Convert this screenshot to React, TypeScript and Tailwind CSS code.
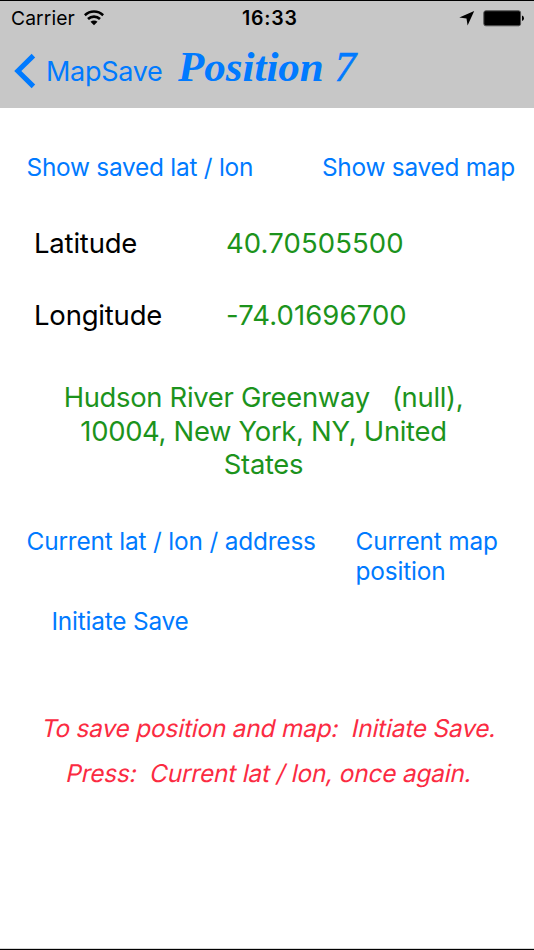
import React from "react";

function StatusBar() {
  return (
    <div className="flex h-[35px] items-center text-[19.3px] leading-[35px] text-black">
      <span className="w-[63px] tracking-[0.1px]">Carrier</span>
      <svg className="ml-[10px] mt-[-2px]" width="20" height="16" viewBox="0 0 20 16" fill="none" stroke="#000" strokeWidth="2.6">
        <path d="M0.8 5.2C6 .2 14 .2 19.2 5.2" />
        <path d="M4 9C7.4 5.8 12.6 5.8 16 9" />
        <path d="M6.5 11.8C8.5 10 11.5 10 13.5 11.8L10 15.2Z" fill="#000" stroke="none" />
      </svg>
      <span className="ml-[138px] w-[58px] text-[19.5px] font-semibold tracking-[0.8px]">16:33</span>
      <svg className="ml-[159px]" width="16" height="15" viewBox="0 0 16 15">
        <path d="M15.2 0L8.6 14.4L7.5 7.6L0.3 6.5Z" />
      </svg>
      <svg className="ml-[8px]" width="42" height="17" viewBox="0 0 42 17">
        <rect x=".8" y=".8" width="36.8" height="15" rx="2" stroke="#555" strokeWidth="1" />
        <path d="M39 5.5Q41 6 41 8.3Q41 10.6 39 11.1Z" />
      </svg>
    </div>
  );
}

function Header() {
  return (
    <header className="h-[108px] border-t border-black bg-[#c7c7c7] pl-[11px]">
      <StatusBar />
      <div className="flex h-[70px] items-center text-[#007aff]">
        <svg className="ml-[3px]" width="22" height="36" viewBox="0 0 22 36" fill="none" stroke="currentColor" strokeWidth="5">
          <path d="M19.4 2.6L3.8 18L19.4 33.4" />
        </svg>
        <button className="mt-[2px] ml-[10px] w-[119px] text-left text-[27px] leading-[70px] tracking-[-0.3px]">MapSave</button>
        <h1 className="mt-[-8px] ml-[13px] whitespace-nowrap font-['Liberation_Serif',serif] text-[43px] leading-[70px] font-bold italic">
          Position <span className="font-normal [-webkit-text-stroke:0.7px_#007aff]">7</span>
        </h1>
      </div>
    </header>
  );
}

function Reading({ label, value }: { label: string; value: string }) {
  return (
    <div className="flex h-[72px] items-center whitespace-nowrap pl-[34px] text-[27.5px] leading-[72px]">
      <dt className="w-[192px] tracking-[-0.2px] text-black">{label}</dt>
      <dd className="tracking-[0.1px] text-[#1c931c]">{value}</dd>
    </div>
  );
}

export default function App() {
  return (
    <main className="flex h-[950px] w-[534px] flex-col overflow-hidden border-b border-black bg-white font-['Inter',sans-serif] font-normal">
      <Header />
      <div className="mt-[39px] flex h-10 justify-between whitespace-nowrap pr-[19px] pl-[26.5px] text-[24.4px] leading-10 tracking-[-0.25px] text-[#007aff]">
        <button>Show saved lat / lon</button>
        <button>Show saved map</button>
      </div>
      <dl className="mt-[20px]">
        <Reading label="Latitude" value="40.70505500" />
        <Reading label="Longitude" value="-74.01696700" />
      </dl>
      <p className="mt-[30px] pr-[7px] text-center text-[27.4px] leading-[33.7px] tracking-[-0.3px] whitespace-pre text-[#1c931c]">
        {"Hudson River Greenway   (null),\n10004, New York, NY, United\nStates"}
      </p>
      <div className="mt-[45px] flex text-[24.4px] leading-[29.5px] tracking-[-0.17px] text-[#007aff]">
        <button className="ml-[26.5px] h-[30px] w-[329px] text-left">Current lat / lon / address</button>
        <button className="w-[160px] text-left">Current map position</button>
      </div>
      <button className="mt-[18px] ml-[51.5px] h-[34px] w-[160px] text-left text-[24.4px] leading-[34px] tracking-[-0.2px] text-[#007aff]">Initiate Save</button>
      <div className="mt-[68px] pl-[5px] text-center text-[24.4px] leading-[45px] tracking-[-0.17px] whitespace-pre text-[#fb2b42]">
        <p className="-skew-x-12">To save position and map:  Initiate Save.</p>
        <p className="-skew-x-12">Press:  Current lat / lon, once again.</p>
      </div>
      <div className="mt-auto h-px bg-[#d5d5d5]" />
    </main>
  );
}
